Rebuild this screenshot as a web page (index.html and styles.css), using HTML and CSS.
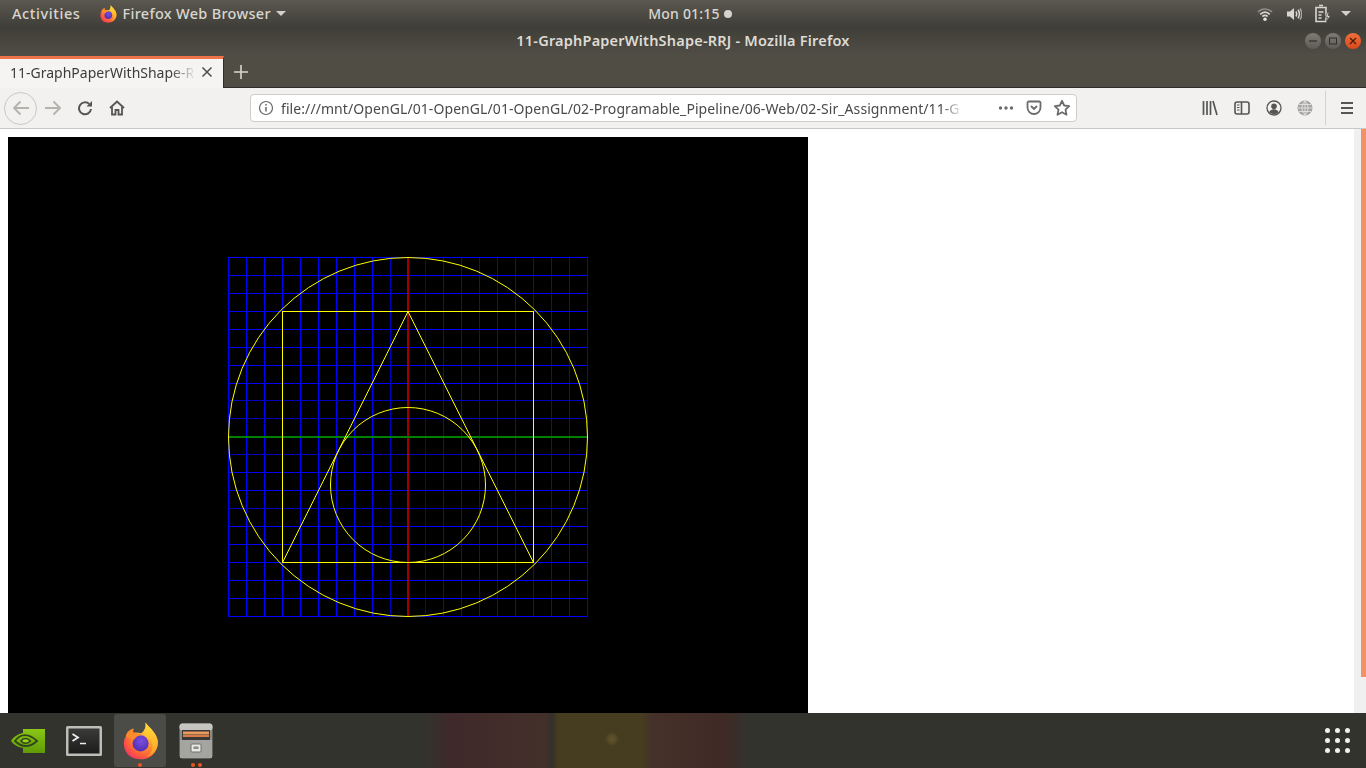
FILE: index.html
```html
<!DOCTYPE html>
<html lang="en">
<head>
    <meta charset="UTF-8">
    <meta name="viewport" content="width=device-width, initial-scale=1.0">
    <title>11-GraphPaperWithShape-RRJ - Mozilla Firefox</title>
    <link rel="stylesheet" href="styles.css">
</head>
<body>

    <!-- shared firefox logo -->
    <svg class="defs" width="0" height="0">
        <defs>
            <radialGradient id="ffBody" cx="0.7" cy="0.25" r="0.95">
                <stop offset="0" stop-color="#ffd23a"/>
                <stop offset="0.4" stop-color="#ff9a2b"/>
                <stop offset="0.72" stop-color="#ff5a3c"/>
                <stop offset="1" stop-color="#f0227a"/>
            </radialGradient>
            <linearGradient id="ffFlame" x1="0.6" y1="0" x2="0.5" y2="1">
                <stop offset="0" stop-color="#ffe03a"/>
                <stop offset="1" stop-color="#ff9a22"/>
            </linearGradient>
            <radialGradient id="ffCore" cx="0.55" cy="0.35" r="0.75">
                <stop offset="0" stop-color="#7a4fe0"/>
                <stop offset="1" stop-color="#4a2aa8"/>
            </radialGradient>
            <linearGradient id="nvGreen" x1="0" y1="0" x2="0" y2="1">
                <stop offset="0" stop-color="#8ac716"/>
                <stop offset="1" stop-color="#5f9a06"/>
            </linearGradient>
            <linearGradient id="termBody" x1="0" y1="0" x2="0" y2="1">
                <stop offset="0" stop-color="#3a3a39"/>
                <stop offset="1" stop-color="#1d1d1c"/>
            </linearGradient>
            <symbol id="firefox" viewBox="0 0 32 32">
                <path d="M3 14C1.500 20 3 25 7 28.500 11 32 20 32.500 25 29 30 25.500 32 19 30.500 14 29 9 25 5.500 20.500.5 21.500 5 19 8 17 9.500 12 8 6 9 3 14Z" fill="url(#ffBody)"/>
                <path d="M20.500.5C21.500 5 20 8 18 10 23 11 27 15 26.500 21 26 25 24 27.500 21 29.500 27 28.500 31.500 23 31 16.500 30.500 10.500 25 6 20.500.5Z" fill="url(#ffFlame)"/>
                <circle cx="16.500" cy="18" r="6.800" fill="url(#ffCore)"/>
                <path d="M4 12C5 8 8 6 11 5.500 10 7 10 8.500 11 9.500 13.500 9.500 16 10 18 11 15 11 12.500 12.500 11 15 9 14 6 14 4 12Z" fill="#ff8a2b"/>
            </symbol>
        </defs>
    </svg>

    <div class="topbar">
        <div class="topbar-left">
            <span class="activities">Activities</span>
            <svg class="app-logo" width="18" height="18"><use href="#firefox"/></svg>
            <span class="app-name">Firefox Web Browser</span>
            <span class="caret"></span>
        </div>
        <div class="clock">Mon 01:15<span class="clock-dot"></span></div>
        <div class="topbar-right">
            <svg width="16" height="16" viewBox="0 0 16 16" fill="none" stroke="#d8d6d0" stroke-width="1.700">
                <path d="M1 6c4-4 10-4 14 0" stroke="#8f8d87"/>
                <path d="M3.200 8.300c3-2.800 6.600-2.800 9.600 0"/>
                <path d="M5.400 10.500c1.800-1.400 3.400-1.400 5.200 0"/>
                <circle cx="8" cy="13.300" r="1.700" fill="#e6e4de" stroke="none"/>
            </svg>
            <svg width="16" height="16" viewBox="0 0 16 16" fill="none" stroke="#d8d6d0" stroke-width="1.500">
                <path d="M1 5.500h3L8 2v12L4 10.500H1z" fill="#d8d6d0" stroke="none"/>
                <path d="M10 5.500c1 1.600 1 3.400 0 5"/>
                <path d="M12 3.800c1.800 2.600 1.800 5.800 0 8.400"/>
                <path d="M14 2.500c2.200 3.400 2.200 7.600 0 11" stroke="#a5a39d"/>
            </svg>
            <svg class="battery" width="16" height="19" viewBox="0 0 16 19" fill="none" stroke="#d8d6d0" stroke-width="1.600">
                <path d="M4 1.500h4M1 3.500h10v14H1z"/>
                <path d="M3.500 8h5M3.500 11h3M3.500 14h3" stroke-width="1.400"/>
                <path d="M13 8l-3 5h2.500l-1 4.500 4-6H13l1-3.500z" fill="#d8d6d0" stroke="#3e3d37" stroke-width="0.600"/>
            </svg>
            <span class="caret"></span>
        </div>
    </div>

    <div class="titlebar">
        <div></div>
        <div class="window-title">11-GraphPaperWithShape-RRJ - Mozilla Firefox</div>
        <div class="window-buttons">
            <span class="win-btn"><svg width="16" height="16" viewBox="0 0 16 16"><path d="M4 8h8" stroke="#2f2e2a" stroke-width="1.200"/></svg></span>
            <span class="win-btn"><svg width="16" height="16" viewBox="0 0 16 16" fill="none"><rect x="4.500" y="5" width="7" height="6" stroke="#2f2e2a"/></svg></span>
            <span class="win-btn close"><svg width="16" height="16" viewBox="0 0 16 16"><path d="M5 5l6 6M11 5l-6 6" stroke="#4a1a08" stroke-width="1.300"/></svg></span>
        </div>
    </div>

    <div class="tabbar">
        <div class="tab">
            <span class="tab-title">11-GraphPaperWithShape-R</span>
            <svg width="12" height="12" viewBox="0 0 12 12"><path d="M1.500 1.500l9 9M10.500 1.500l-9 9" stroke="#4d4d4d" stroke-width="1.500"/></svg>
        </div>
        <div class="newtab">
            <svg width="14" height="14" viewBox="0 0 14 14"><path d="M7 0v14M0 7h14" stroke="#d8d6d0" stroke-width="1.600"/></svg>
        </div>
    </div>

    <div class="navbar">
        <button class="nav-btn back">
            <svg width="18" height="16" viewBox="0 0 18 16" fill="none" stroke="#b4b2af" stroke-width="1.800"><path d="M17 8H2M8.500 1.500L2 8l6.500 6.500"/></svg>
        </button>
        <button class="nav-btn">
            <svg width="18" height="16" viewBox="0 0 18 16" fill="none" stroke="#b4b2af" stroke-width="1.800"><path d="M1 8h15M9.500 1.500L16 8l-6.500 6.500"/></svg>
        </button>
        <button class="nav-btn">
            <svg width="16" height="16" viewBox="0 0 16 16" fill="none" stroke="#555" stroke-width="2"><path d="M14 9a6 6 0 1 1-1.800-5"/><path d="M15 1v5.500H9.500" fill="#555" stroke="none"/></svg>
        </button>
        <button class="nav-btn">
            <svg width="16" height="16" viewBox="0 0 16 16" fill="none" stroke="#555" stroke-width="1.800"><path d="M1 8l7-6.500L15 8"/><path d="M3 7v7.500h3.500V10h3v4.500H13V7"/></svg>
        </button>

        <div class="urlbar">
            <svg width="16" height="16" viewBox="0 0 16 16" fill="none" stroke="#666" stroke-width="1.200"><circle cx="8" cy="8" r="6.500"/><path d="M8 7v4.500" stroke-width="1.500"/><circle cx="8" cy="4.800" r="0.900" fill="#666" stroke="none"/></svg>
            <div class="url-text">file:///mnt/OpenGL/01-OpenGL/01-OpenGL/02-Programable_Pipeline/06-Web/02-Sir_Assignment/11-G</div>
            <svg width="16" height="16" viewBox="0 0 16 16" fill="#6b6b6b"><circle cx="2.500" cy="8" r="1.700"/><circle cx="8" cy="8" r="1.700"/><circle cx="13.500" cy="8" r="1.700"/></svg>
            <svg width="16" height="16" viewBox="0 0 16 16" fill="none" stroke="#6b6b6b" stroke-width="1.800"><path d="M2.500 1.500h11a1.500 1.500 0 0 1 1 1v5a6.500 6.500 0 0 1-13 0v-5a1.500 1.500 0 0 1 1-1z"/><path d="M5 6l3 3 3-3"/></svg>
            <svg class="star" width="18" height="18" viewBox="0 0 18 18" fill="none" stroke="#6b6b6b" stroke-width="1.800" stroke-linejoin="round"><path d="M9 1.800l2.200 4.700 5 .6-3.700 3.500 1 5.100L9 13.200l-4.500 2.500 1-5.100L1.800 7.100l5-.6z"/></svg>
        </div>

        <div class="nav-right">
            <button class="nav-btn">
                <svg width="16" height="16" viewBox="0 0 16 16" fill="none" stroke="#555" stroke-width="1.700"><path d="M1.500 1v14M5 1v14M8.500 1v14M11 1l4 14"/></svg>
            </button>
            <button class="nav-btn">
                <svg width="16" height="16" viewBox="0 0 16 16" fill="none" stroke="#555" stroke-width="1.600"><rect x="1" y="2" width="14" height="12" rx="2"/><path d="M7.500 2v12"/><path d="M3 5h2.500M3 7.500h2.500M3 10h2.500" stroke-width="1.100"/></svg>
            </button>
            <button class="nav-btn">
                <svg width="16" height="16" viewBox="0 0 16 16" fill="none" stroke="#555" stroke-width="1.300"><circle cx="8" cy="8" r="7"/><circle cx="8" cy="6.300" r="2.800" fill="#555" stroke="none"/><path d="M3.200 12.500c1-2.500 2.800-3.200 4.800-3.200s3.800.7 4.800 3.200c-2.800 2.200-6.800 2.200-9.600 0z" fill="#555" stroke="none"/></svg>
            </button>
            <button class="nav-btn globe">
                <svg width="16" height="16" viewBox="0 0 16 16" fill="none"><circle cx="8" cy="8" r="7.500" fill="#a6a5a3"/><path d="M1 8h14M2 4.500h12M2 11.500h12M8 1v14M8 1c-4 4-4 10 0 14M8 1c4 4 4 10 0 14" stroke="#f2f1ef" stroke-width="0.700"/></svg>
            </button>
            <span class="nav-sep"></span>
            <button class="nav-btn">
                <svg width="14" height="12" viewBox="0 0 14 12" fill="none" stroke="#555" stroke-width="2"><path d="M1 1h12M1 6h12M1 11h12"/></svg>
            </button>
        </div>
    </div>

    <div class="content">
        <div class="page">
            <svg class="gl-canvas" width="800" height="600" viewBox="0 0 800 600" fill="none">
                <!-- graph paper -->
                <g shape-rendering="crispEdges">
                    <path stroke="#0000ff" d="M220.500 120V480M238.500 120V480M256.500 120V480M274.500 120V480M292.500 120V480M310.500 120V480M328.500 120V480M346.500 120V480M364.500 120V480M435.500 120V480M453.500 120V480M471.500 120V480M489.500 120V480M507.500 120V480M525.500 120V480M543.500 120V480M561.500 120V480M579.500 120V480"/>
                    <path stroke="#0000ff" d="M220 120.500H580M220 138.500H580M220 156.500H580M220 174.500H580M220 192.500H580M220 210.500H580M220 228.500H580M220 246.500H580M220 335.500H580M220 353.500H580M220 389.500H580M220 407.500H580M220 425.500H580M220 443.500H580M220 461.500H580M220 479.500H580"/>
                    <path stroke="#0000c0" d="M382.500 120V480M417.500 120V480M220 263.500H580M220 281.500H580M220 317.500H580M220 371.500H580"/>
                    <rect class="axis-y" x="399" y="120" width="2" height="360"/>
                    <rect class="axis-x" x="220" y="299" width="360" height="2"/>
                    <rect class="shape" x="274.500" y="174.500" width="251" height="251"/>
                </g>
                <!-- shapes -->
                <path class="shape" d="M400 174.500L274.500 425.500H525.500Z"/>
                <circle class="shape" cx="400" cy="300" r="179.500"/>
                <circle class="shape" cx="400" cy="348" r="77.500"/>
            </svg>
        </div>
        <div class="scrollbar"><div class="scroll-thumb"></div></div>
    </div>

    <div class="dock">
        <div class="dock-item">
            <svg width="36" height="26" viewBox="0 0 36 26">
                <path d="M13 1H35V25H13V20C7 19 3 16 1 13 3 9 8 6 13 5z" fill="url(#nvGreen)"/>
                <path d="M5 13c3-4 6.500-5.800 10-5.800 4.500 0 8.500 2.500 12 5.800-3 2.800-6.500 5-11 5-4.500 0-8-2-11-5z" fill="none" stroke="#33451a" stroke-width="1.800"/>
                <path d="M11 13c1.200-1.800 2.800-2.600 4.500-2.600 2 0 3.500 1 5 2.600-1.500 1.400-3 2.300-5 2.300-1.800 0-3.300-.8-4.500-2.300z" fill="#9ad420" stroke="#33451a" stroke-width="1.500"/>
            </svg>
        </div>
        <div class="dock-item">
            <svg width="36" height="30" viewBox="0 0 36 30">
                <rect width="36" height="30" rx="1.500" fill="#bcbcb8"/>
                <rect x="2.500" y="2.500" width="31" height="25" fill="url(#termBody)"/>
                <path d="M6.500 8l5.500 3.500L6.500 15" fill="none" stroke="#eee" stroke-width="1.800"/>
                <path d="M14 17.500h6" stroke="#eee" stroke-width="1.500"/>
            </svg>
        </div>
        <div class="dock-item active">
            <svg width="38" height="38"><use href="#firefox"/></svg>
            <span class="run-dots"><i></i></span>
        </div>
        <div class="dock-item">
            <svg width="34" height="36" viewBox="0 0 34 36">
                <rect x="0.500" y="0.500" width="33" height="35" rx="3" fill="#8c8c88"/>
                <rect x="0.500" y="0.500" width="33" height="7" rx="3" fill="#c6c5c1"/>
                <rect x="3" y="7" width="28" height="10" fill="#3a3836"/>
                <rect x="4" y="8.500" width="26" height="3" fill="#e99a5c"/>
                <rect x="4" y="12" width="26" height="2" fill="#d97f45"/>
                <rect x="1" y="17" width="32" height="18" fill="#a4a4a0"/>
                <rect x="12" y="21" width="10" height="8" rx="1" fill="#e8e8e4" stroke="#6f6f6b"/>
                <rect x="14.500" y="23.500" width="5" height="2.500" fill="#8a8a86"/>
            </svg>
            <span class="run-dots"><i></i><i></i></span>
        </div>
        <div class="app-grid">
            <i></i><i></i><i></i><i></i><i></i><i></i><i></i><i></i><i></i>
        </div>
    </div>

</body>
</html>
```

FILE: styles.css
```css
/* whole screen, stacked panels */
body {
    margin: 0;
    width: 1366px;
    height: 768px;
    display: flex;
    flex-direction: column;
    overflow: hidden;
    font-family: "Noto Sans", sans-serif;
    font-size: 14px;
    background-color: #fff;
}
button {
    border: 0;
    padding: 0;
    background: none;
}
.defs {
    position: absolute;
}

/* gnome top bar */
.topbar {
    height: 27px;
    display: grid;
    grid-template-columns: 1fr auto 1fr;
    align-items: center;
    color: #d9d6cf;
    font-weight: 500;
    letter-spacing: 0.2px;
    background: linear-gradient(#5b5850, #3f3e38);
}
.topbar-left {
    display: flex;
    align-items: center;
    padding-left: 12px;
    font-size: 14.5px;
}
.activities {
    margin-right: 19px;
    margin-bottom: 2px;
    letter-spacing: 0.6px;
}
.app-logo {
    margin-right: 5px;
}
.app-name {
    margin-bottom: 2px;
    letter-spacing: 0.3px;
}
.caret {
    width: 0;
    height: 0;
    margin-left: 5px;
    border-left: 5px solid transparent;
    border-right: 5px solid transparent;
    border-top: 5px solid #d2d0ca;
}
.clock {
    display: flex;
    align-items: center;
    padding-left: 14px;
}
.clock-dot {
    width: 8px;
    height: 8px;
    margin-left: 4px;
    border-radius: 50%;
    background-color: #d5d3cd;
}
.topbar-right {
    display: flex;
    align-items: center;
    justify-content: flex-end;
    gap: 13px;
    padding-right: 15px;
}
.topbar-right .caret {
    margin-left: -3px;
}

/* window title */
.titlebar {
    height: 28px;
    display: grid;
    grid-template-columns: 1fr auto 1fr;
    align-items: center;
    background: linear-gradient(#3f3e38, #504d45);
}
.window-title {
    margin-bottom: 2px;
    color: #dedbd4;
    font-size: 14.5px;
    font-weight: 600;
    letter-spacing: 0.2px;
}
.window-buttons {
    display: flex;
    justify-content: flex-end;
    gap: 4px;
    padding-right: 5px;
}
.win-btn {
    width: 16px;
    height: 16px;
    border-radius: 50%;
    background: linear-gradient(#7d7b74, #5d5b54);
}
.win-btn svg {
    display: block;
}
.win-btn.close {
    background: linear-gradient(#f0703c, #d9481a);
}

/* tabs */
.tabbar {
    height: 33px;
    display: flex;
    background-color: #504d45;
    box-shadow: inset 0 -1px 0 #2f2e2a;
}
.tab {
    width: 224px;
    height: 32px;
    margin-top: 1px;
    box-sizing: border-box;
    display: flex;
    align-items: center;
    padding: 0 10px 3px 10px;
    color: #3c3c3c;
    background-color: #f5f4f2;
    border-top: 3px solid #f0734a;
    border-right: 1px solid #2f2e2a;
}
.tab-title {
    flex: 1;
    overflow: hidden;
    white-space: nowrap;
    -webkit-mask-image: linear-gradient(to right, #000 160px, transparent 186px);
    mask-image: linear-gradient(to right, #000 160px, transparent 186px);
}
.newtab {
    width: 34px;
    display: flex;
    align-items: center;
    justify-content: center;
}

/* firefox toolbar */
.navbar {
    height: 40px;
    display: flex;
    align-items: center;
    padding-left: 4px;
    background-color: #f2f1ef;
    border-bottom: 1px solid #c9c7c3;
}
.nav-btn {
    width: 32px;
    height: 32px;
    flex: none;
    display: flex;
    align-items: center;
    justify-content: center;
}
.nav-btn.back {
    width: 33px;
    height: 33px;
    box-sizing: border-box;
    border: 1px solid #c9c7c3;
    border-radius: 50%;
}
.urlbar {
    width: 827px;
    height: 28px;
    box-sizing: border-box;
    flex: none;
    display: flex;
    align-items: center;
    gap: 12px;
    margin-left: 117px;
    padding: 0 5px 0 7px;
    background-color: #fff;
    border: 1px solid #cfcdc9;
    border-radius: 4px;
}
.url-text {
    flex: 1;
    min-width: 0;
    margin-left: -5px;
    margin-right: 24px;
    overflow: hidden;
    white-space: nowrap;
    letter-spacing: 0.08px;
    color: #4a4a4a;
    -webkit-mask-image: linear-gradient(to right, #000 660px, transparent 682px);
    mask-image: linear-gradient(to right, #000 660px, transparent 682px);
}
.star {
    margin-left: -1px;
}
.nav-right {
    flex: 1;
    display: flex;
    align-items: center;
    justify-content: flex-end;
    padding-right: 3px;
}
.globe {
    margin-left: -1px;
    margin-right: 1px;
}
.nav-sep {
    width: 1px;
    height: 34px;
    margin: 0 5px 0 3px;
    background-color: #d4d2ce;
}

/* page area */
.content {
    height: 584px;
    display: flex;
}
.page {
    flex: 1;
    padding: 8px;
    overflow: hidden;
}
.gl-canvas {
    display: block;
    background-color: #000;
}
.axis-y {
    fill: #a00000;
}
.axis-x {
    fill: #008000;
}
.shape {
    stroke: #ffff00;
}
.scrollbar {
    width: 12px;
    display: flex;
    justify-content: flex-end;
    background-color: #f0f0f0;
}
.scroll-thumb {
    width: 5px;
    height: 548px;
    background-color: #f29068;
}

/* dock, the gradients stand in for the wallpaper behind it */
.dock {
    height: 55px;
    display: flex;
    align-items: center;
    padding-left: 2px;
    background-color: #33332e;
    background-image:
        radial-gradient(circle at 612px 26px, #5f5230 0, #574a26 4px, transparent 7px),
        linear-gradient(to right, transparent 425px, #40292a 452px, #43302a 545px, #33302a 552px, #463c20 558px, #463c20 643px, #45302a 652px, #3f2a25 725px, transparent 748px);
}
.dock-item {
    position: relative;
    width: 52px;
    height: 53px;
    margin-right: 4px;
    display: flex;
    align-items: center;
    justify-content: center;
    border-radius: 3px;
}
.dock-item.active {
    background-color: #4b4b47;
}
.run-dots {
    position: absolute;
    left: 0;
    right: 0;
    bottom: 0;
    display: flex;
    justify-content: center;
    gap: 3px;
}
.run-dots i {
    width: 4px;
    height: 4px;
    border-radius: 50%;
    background-color: #e95420;
}
.app-grid {
    margin-left: auto;
    margin-right: 16px;
    display: grid;
    grid-template-columns: repeat(3, 5px);
    gap: 5px;
}
.app-grid i {
    width: 5px;
    height: 5px;
    border-radius: 50%;
    background-color: #f0f0ee;
}
```
